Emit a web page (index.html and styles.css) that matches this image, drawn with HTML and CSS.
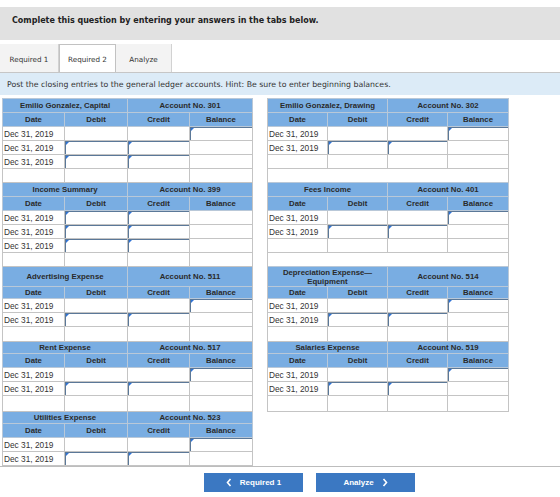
FILE: index.html
```html
<!DOCTYPE html>
<html lang="en">
  <head>
    <meta charset="UTF-8" />
    <title>Closing entries - Required 2</title>
    <link rel="stylesheet" href="styles.css">
  </head>
  <body>
    <div class="page">
      <div class="prompt">Complete this question by entering your answers in the tabs below.</div>

      <div class="tabs">
        <div class="tab">Required 1</div>
        <div class="tab active">Required 2</div>
        <div class="tab">Analyze</div>
      </div>

      <div class="hint">Post the closing entries to the general ledger accounts. Hint: Be sure to enter beginning balances.</div>

      <div class="ledgers">
        <table class="ledger">
          <colgroup>
            <col class="c-l"><col class="c-l2"><col class="c-l"><col class="c-l2">
            <col class="c-gap">
            <col class="c-r"><col class="c-r"><col class="c-r"><col class="c-r2">
          </colgroup>

          <!-- Capital / Drawing -->
          <tr class="h1">
            <th colspan="2">Emilio Gonzalez, Capital</th>
            <th colspan="2">Account No. 301</th>
            <td class="gap" rowspan="22"></td>
            <th colspan="2">Emilio Gonzalez, Drawing</th>
            <th colspan="2">Account No. 302</th>
          </tr>
          <tr class="h2">
            <th>Date</th><th>Debit</th><th>Credit</th><th>Balance</th>
            <th>Date</th><th>Debit</th><th>Credit</th><th>Balance</th>
          </tr>
          <tr>
            <td>Dec 31, 2019</td><td></td><td></td><td><span class="fld"><input type="text"></span></td>
            <td>Dec 31, 2019</td><td></td><td></td><td><span class="fld"><input type="text"></span></td>
          </tr>
          <tr>
            <td>Dec 31, 2019</td><td><span class="fld"><input type="text"></span></td><td><span class="fld"><input type="text"></span></td><td></td>
            <td>Dec 31, 2019</td><td><span class="fld"><input type="text"></span></td><td><span class="fld"><input type="text"></span></td><td></td>
          </tr>
          <tr>
            <td>Dec 31, 2019</td><td><span class="fld"><input type="text"></span></td><td><span class="fld"><input type="text"></span></td><td></td>
            <td></td><td></td><td></td><td></td>
          </tr>
          <tr>
            <td></td><td></td><td></td><td></td>
            <td class="blank" colspan="4"></td>
          </tr>

          <!-- Income Summary / Fees Income -->
          <tr class="h1">
            <th colspan="2">Income Summary</th>
            <th colspan="2">Account No. 399</th>
            <th colspan="2">Fees Income</th>
            <th colspan="2">Account No. 401</th>
          </tr>
          <tr class="h2">
            <th>Date</th><th>Debit</th><th>Credit</th><th>Balance</th>
            <th>Date</th><th>Debit</th><th>Credit</th><th>Balance</th>
          </tr>
          <tr>
            <td>Dec 31, 2019</td><td><span class="fld"><input type="text"></span></td><td><span class="fld"><input type="text"></span></td><td></td>
            <td>Dec 31, 2019</td><td></td><td></td><td><span class="fld"><input type="text"></span></td>
          </tr>
          <tr>
            <td>Dec 31, 2019</td><td><span class="fld"><input type="text"></span></td><td><span class="fld"><input type="text"></span></td><td></td>
            <td>Dec 31, 2019</td><td><span class="fld"><input type="text"></span></td><td><span class="fld"><input type="text"></span></td><td></td>
          </tr>
          <tr>
            <td>Dec 31, 2019</td><td><span class="fld"><input type="text"></span></td><td><span class="fld"><input type="text"></span></td><td></td>
            <td></td><td></td><td></td><td></td>
          </tr>
          <tr>
            <td></td><td></td><td></td><td></td>
            <td class="blank" colspan="4"></td>
          </tr>

          <!-- Advertising / Depreciation -->
          <tr class="h1 tall">
            <th colspan="2">Advertising Expense</th>
            <th colspan="2">Account No. 511</th>
            <th colspan="2">Depreciation Expense—<br>Equipment</th>
            <th colspan="2">Account No. 514</th>
          </tr>
          <tr class="h2 thin">
            <th>Date</th><th>Debit</th><th>Credit</th><th>Balance</th>
            <th>Date</th><th>Debit</th><th>Credit</th><th>Balance</th>
          </tr>
          <tr>
            <td>Dec 31, 2019</td><td></td><td></td><td><span class="fld"><input type="text"></span></td>
            <td>Dec 31, 2019</td><td></td><td></td><td><span class="fld"><input type="text"></span></td>
          </tr>
          <tr>
            <td>Dec 31, 2019</td><td><span class="fld"><input type="text"></span></td><td><span class="fld"><input type="text"></span></td><td></td>
            <td>Dec 31, 2019</td><td><span class="fld"><input type="text"></span></td><td><span class="fld"><input type="text"></span></td><td></td>
          </tr>
          <tr class="last">
            <td></td><td></td><td></td><td></td>
            <td></td><td></td><td></td><td></td>
          </tr>

          <!-- Rent / Salaries -->
          <tr class="h1 short">
            <th colspan="2">Rent Expense</th>
            <th colspan="2">Account No. 517</th>
            <th colspan="2">Salaries Expense</th>
            <th colspan="2">Account No. 519</th>
          </tr>
          <tr class="h2">
            <th>Date</th><th>Debit</th><th>Credit</th><th>Balance</th>
            <th>Date</th><th>Debit</th><th>Credit</th><th>Balance</th>
          </tr>
          <tr>
            <td>Dec 31, 2019</td><td></td><td></td><td><span class="fld"><input type="text"></span></td>
            <td>Dec 31, 2019</td><td></td><td></td><td><span class="fld"><input type="text"></span></td>
          </tr>
          <tr>
            <td>Dec 31, 2019</td><td><span class="fld"><input type="text"></span></td><td><span class="fld"><input type="text"></span></td><td></td>
            <td>Dec 31, 2019</td><td><span class="fld"><input type="text"></span></td><td><span class="fld"><input type="text"></span></td><td></td>
          </tr>
          <tr class="last2">
            <td></td><td></td><td></td><td></td>
            <td></td><td></td><td></td><td></td>
          </tr>

          <!-- Utilities -->
          <tr class="h1 short">
            <th colspan="2">Utilities Expense</th>
            <th colspan="2">Account No. 523</th>
          </tr>
          <tr class="h2">
            <th>Date</th><th>Debit</th><th>Credit</th><th>Balance</th>
          </tr>
          <tr>
            <td>Dec 31, 2019</td><td></td><td></td><td><span class="fld"><input type="text"></span></td>
          </tr>
          <tr>
            <td>Dec 31, 2019</td><td><span class="fld"><input type="text"></span></td><td><span class="fld"><input type="text"></span></td><td></td>
          </tr>
        </table>
      </div>

      <div class="nav">
        <button type="button" class="nav-btn">
          <svg width="6" height="9" viewBox="0 0 6 9"><path d="M4.5 1 L1.5 4.5 L4.5 8" fill="none" stroke="#fff" stroke-width="1.6"/></svg>
          Required 1
        </button>
        <button type="button" class="nav-btn">
          Analyze
          <svg width="6" height="9" viewBox="0 0 6 9"><path d="M1.5 1 L4.5 4.5 L1.5 8" fill="none" stroke="#fff" stroke-width="1.6"/></svg>
        </button>
      </div>
    </div>
  </body>
</html>
```

FILE: styles.css
```css
body {
  margin: 0;
  font-family: "DejaVu Sans", Verdana, sans-serif;
  color: #333;
  background: #fff;
}
.page {
  padding-top: 7px;
}
.prompt {
  background: #e1e1e1;
  color: #222;
  font-weight: bold;
  font-size: 8px;
  line-height: 11px;
  padding: 8px 12px 14px;
}

/* tabs */
.tabs {
  display: flex;
  margin-top: 4px;
  height: 28px;
  border-bottom: 1px solid #c6c6c6;
}
.tab {
  width: 59px;
  display: flex;
  align-items: center;
  justify-content: center;
  padding-top: 2px;
  box-sizing: border-box;
  font-size: 7.2px;
  background: #f3f3f3;
  border-right: 1px solid #d2d2d2;
}
.tab.active {
  width: 57px;
  background: #fff;
  border: 1px solid #c2c2c2;
  border-bottom: none;
}
.tab:last-child {
  width: 56px;
}
.hint {
  background: #dcebf7;
  font-size: 7.8px;
  line-height: 9px;
  padding: 7px 7px 6px;
}

/* ledger grid */
.ledgers {
  padding: 3px 0 0 2px;
  border-bottom: 1px solid #bdbdbd;
}
.ledger {
  border-collapse: collapse;
  table-layout: fixed;
  width: 506px;
  font-family: "Liberation Sans", Arial, sans-serif;
}
.c-l { width: 62px; }
.c-l2 { width: 63px; }
.c-gap { width: 15px; }
.c-r { width: 60px; }
.c-r2 { width: 61px; }
.ledger th,
.ledger td {
  border: 1px solid #c4c4c4;
  padding: 0;
  height: 13px;
  line-height: 10px;
  overflow: hidden;
  white-space: nowrap;
}
.ledger th {
  background: #79ade2;
  color: #2a2a2a;
  font-size: 7.8px;
  font-weight: bold;
  text-align: center;
  border-color: #b9c8d8;
}
.ledger td {
  font-size: 8.3px;
  padding-left: 1px;
  color: #333;
}
.ledger .h1.tall th {
  height: 19px;
  line-height: 9px;
}
.ledger .h2.thin th {
  height: 11px;
}
.ledger .h1.short th {
  height: 11px;
}
.ledger .last td {
  height: 14px;
}
.ledger .last2 td {
  height: 15px;
}
.ledger td.gap {
  border-top: none;
  border-bottom: none;
  background: #fff;
}
.ledger td.blank {
  border-bottom: none;
}

/* answer boxes */
.fld {
  position: relative;
  display: block;
  margin-left: -1px;
}
.fld::before {
  content: "";
  position: absolute;
  left: 1px;
  top: 1px;
  border-left: 3px solid #2f73d6;
  border-bottom: 3px solid transparent;
}
.fld input {
  display: block;
  box-sizing: border-box;
  width: calc(100% + 1px);
  height: 14px;
  margin: -1px 0;
  padding: 0 2px;
  border: 1px solid #5b7898;
  background: #fff;
  font: 8.3px "Liberation Sans", Arial, sans-serif;
}

/* bottom navigation */
.nav {
  display: flex;
  gap: 13px;
  padding: 6px 0 0 204px;
}
.nav-btn {
  width: 99px;
  height: 19px;
  display: flex;
  align-items: center;
  justify-content: center;
  gap: 8px;
  padding: 0;
  border: none;
  background: #3b78c2;
  color: #fff;
  font: bold 8px "Liberation Sans", Arial, sans-serif;
}
```
